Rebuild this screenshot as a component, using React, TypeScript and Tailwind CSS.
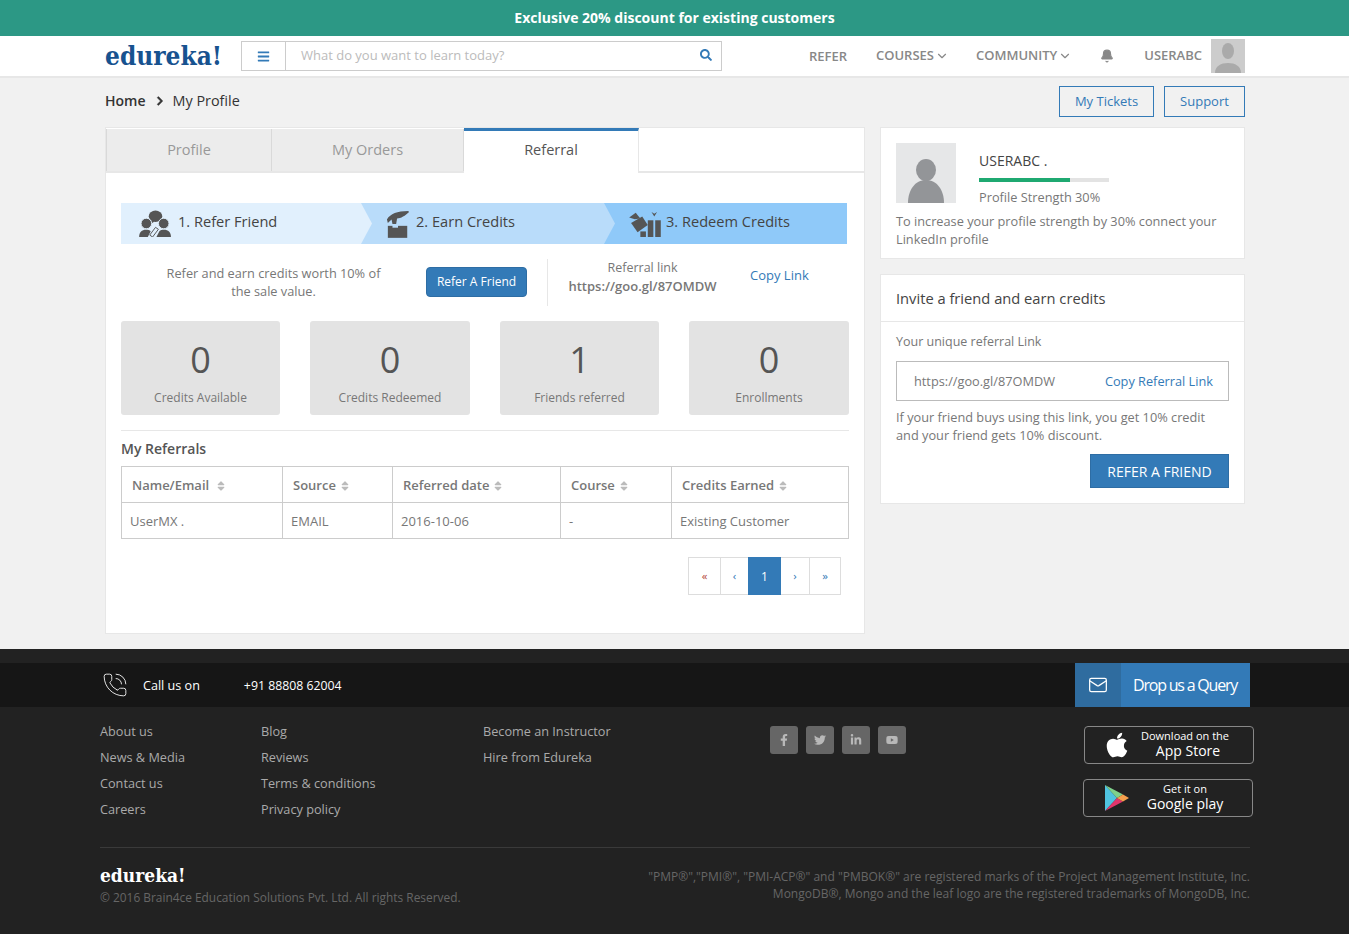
import { Bell, ChevronDown, Mail, PhoneCall } from "lucide-react";
import { FaApple, FaBars, FaChevronRight, FaFacebookF, FaLinkedinIn, FaSearch, FaSort, FaTwitter, FaYoutube } from "react-icons/fa";

const stats = [
  { value: "0", label: "Credits Available" },
  { value: "0", label: "Credits Redeemed" },
  { value: "1", label: "Friends referred" },
  { value: "0", label: "Enrollments" },
];

const columns = [
  { title: "Name/Email", width: "w-[160px]", gap: "ml-[6px]", body: "UserMX ." },
  { title: "Source", width: "w-[110px]", gap: "ml-[3px]", body: "EMAIL" },
  { title: "Referred date", width: "w-[168px]", gap: "ml-[3px]", body: "2016-10-06" },
  { title: "Course", width: "w-[111px]", gap: "ml-[3px]", body: "-" },
  { title: "Credits Earned", width: "w-[177px]", gap: "ml-[3px]", body: "Existing Customer" },
];

const footerCols = [
  { width: "w-[161px]", links: ["About us", "News & Media", "Contact us", "Careers"] },
  { width: "w-[222px]", links: ["Blog", "Reviews", "Terms & conditions", "Privacy policy"] },
  { width: "w-[287px]", links: ["Become an Instructor", "Hire from Edureka"] },
];

const Avatar = ({ className }: { className: string }) => (
  <svg viewBox="0 0 60 60" className={className}>
    <rect width="60" height="60" fill="#e6e7e8" />
    <ellipse cx="30" cy="27" rx="10" ry="11" fill="#939598" />
    <path d="M12 60 C12 47 19 37 30 37 C41 37 48 47 48 60 Z" fill="#939598" />
  </svg>
);

const FriendsIcon = () => (
  <svg viewBox="0 0 34 28" className="h-[27px] w-[33px]" fill="#555">
    <ellipse cx="17" cy="6.5" rx="7" ry="6" />
    <path d="M13 11 L11 15 L16 12 Z" />
    <circle cx="7.5" cy="14" r="5.5" stroke="#e1f0fd" />
    <circle cx="25.5" cy="14" r="5.5" stroke="#e1f0fd" />
    <path d="M0 28 C0 23 3 20.5 7 20.5 C9 20.5 11 21 12 22 L9 28 Z" />
    <path d="M33 28 C33 23 30 20.5 26 20.5 C24 20.5 22 21 21 22 L18 28 Z" />
    <path d="M11 26 L17 18 L20 20 L14 28 Z" fill="none" stroke="#555" />
  </svg>
);

const EarnIcon = () => (
  <svg viewBox="0 0 26 30" className="h-[28px] w-[24px]" fill="#555">
    <path d="M1 10 C5 4 12 1 24 1 L25 2 C21 6 16 9 12 9 L11 15 L7 15 L6 10 L2 14 Z" />
    <rect x="2" y="17" width="21" height="13" />
    <rect x="7" y="15" width="6" height="4" fill="#b9dcfa" />
  </svg>
);

const GiftIcon = () => (
  <svg viewBox="0 0 34 28" className="h-[26px] w-[32px]" fill="#555">
    <path d="M7 2 L12 8 L6 9 L0 7 Z" />
    <path d="M2 13 L14 6 L20 15 L9 23 Z" />
    <rect x="20" y="10" width="6" height="18" />
    <rect x="28" y="10" width="6" height="18" />
    <rect x="12" y="22" width="6" height="6" />
    <path d="M24 1 L27 3 L30 1 L27 6 Z" />
  </svg>
);

const PlayIcon = () => (
  <svg viewBox="0 0 24 26" className="h-[26px] w-[24px]">
    <path d="M0 0 L12 13 L0 26 Z" fill="#4fc3e0" />
    <path d="M0 0 L18 9.5 L12 13 Z" fill="#7fd18b" />
    <path d="M0 26 L18 16.5 L12 13 Z" fill="#e0356b" />
    <path d="M18 9.5 L24 13 L18 16.5 L12 13 Z" fill="#f6a04d" />
  </svg>
);

export default function App() {
  return (
    <div className="w-[1349px] bg-[#f1f1f1] font-['Open_Sans',sans-serif] text-[12.75px] text-[#777]">
      {/* Top banner */}
      <div className="flex h-9 items-center justify-center bg-[#2c9885] pb-[2px] text-[14px] font-bold text-white">
        Exclusive 20% discount for existing customers
      </div>

      {/* Nav */}
      <div className="h-[42px] border-b-2 border-[#e7e7e7] bg-white">
        <div className="ml-[105px] flex h-10 w-[1140px] items-center">
          <div className="w-[136px] font-['DejaVu_Serif_Condensed','DejaVu_Serif',serif] text-[26px] font-bold leading-none text-[#17528f]">
            edureka!
          </div>
          <div className="flex h-[30px] w-[481px] items-center border border-[#ccc]">
            <div className="flex h-full w-[44px] items-center justify-center border-r border-[#ccc] text-[#337ab7]">
              <FaBars size={13} />
            </div>
            <span className="ml-[15px] text-[13px] text-[#bbb]">What do you want to learn today?</span>
            <FaSearch size={12} className="ml-auto mr-[9px] mb-[2px] text-[#337ab7]" />
          </div>
          <div className="ml-auto flex items-center text-[13px] font-semibold text-[#888]">
            <span className="mt-px">REFER</span>
            <span className="ml-[29px] flex items-center">COURSES<ChevronDown size={14} className="ml-px" /></span>
            <span className="ml-[27px] flex items-center">COMMUNITY<ChevronDown size={14} className="ml-px" /></span>
            <Bell size={14} fill="#888" className="ml-[28px]" />
            <span className="ml-[30px]">USERABC</span>
            <div className="ml-[9px] flex h-[34px] w-[34px] items-end justify-center bg-[#ccc]">
              <svg viewBox="0 0 34 34" className="h-[34px] w-[34px]" fill="#aaa">
                <ellipse cx="17" cy="12" rx="6" ry="8" />
                <path d="M4 34 C4 27 10 24 17 24 C24 24 30 27 30 34 Z" />
              </svg>
            </div>
          </div>
        </div>
      </div>

      <div className="ml-[105px] w-[1140px]">
        {/* Breadcrumb */}
        <div className="flex h-[49px] items-start justify-between pt-2">
          <div className="mt-[5px] flex items-center text-[14.4px] leading-5 text-[#333]">
            <span className="text-[14px] font-semibold">Home</span>
            <FaChevronRight size={10} stroke="currentColor" strokeWidth={30} className="ml-[9px] mr-[8px]" />
            <span>My Profile</span>
          </div>
          <div className="flex gap-[10px]">
            <button className="h-[31px] w-[95px] border border-[#337ab7] text-[13px] text-[#337ab7]">My Tickets</button>
            <button className="h-[31px] w-[81px] border border-[#337ab7] text-[13px] text-[#337ab7]">Support</button>
          </div>
        </div>

        <div className="flex items-start justify-between">
          {/* Left card */}
          <div className="h-[507px] w-[760px] border border-[#e7e7e7] bg-white">
            <div className="flex h-[45px] border-b-2 border-[#e7e7e7] text-[14.5px]">
              <div className="mt-px flex h-[42px] w-[166px] items-center justify-center border-x border-[#d9d9d9] bg-[#ececec] pb-px text-[#999]">Profile</div>
              <div className="mt-px flex h-[42px] w-[192px] items-center justify-center border-r border-[#d9d9d9] bg-[#ececec] pb-px text-[#999]">My Orders</div>
              <div className="flex h-[45px] w-[175px] items-center justify-center border-r border-t-[3px] border-[#e7e7e7] border-t-[#337ab7] bg-white pb-[4px] text-[#555]">Referral</div>
            </div>

            <div className="px-[15px] pt-[30px]">
              {/* Steps */}
              <div className="flex h-[41px] w-[726px] bg-[#8fc9f9] text-[14.6px] text-[#444]">
                <div className="relative z-20 flex w-[251px] items-center gap-[6px] bg-[#e1f0fd] pl-[18px] [clip-path:polygon(0_0,240px_0,100%_50%,240px_100%,0_100%)]">
                  <FriendsIcon />
                  <span className="mb-[4px]">1. Refer Friend</span>
                </div>
                <div className="relative z-10 -ml-[11px] flex w-[254px] items-center gap-[6px] bg-[#b9dcfa] pl-[25px] [clip-path:polygon(0_0,243px_0,100%_50%,243px_100%,0_100%)]">
                  <EarnIcon />
                  <span className="mb-[4px]">2. Earn Credits</span>
                </div>
                <div className="-ml-[11px] flex flex-1 items-center gap-[5px] pl-[25px]">
                  <GiftIcon />
                  <span className="mb-[4px]">3. Redeem Credits</span>
                </div>
              </div>

              {/* Refer info */}
              <div className="mt-[15px] flex h-[47px] items-center">
                <p className="mb-[2px] w-[305px] px-[40px] text-center leading-[18px]">Refer and earn credits worth 10% of the sale value.</p>
                <button className="mb-[2px] h-[30px] w-[101px] rounded-sm border border-[#2e6da4] bg-[#337ab7] text-[12px] text-white">Refer A Friend</button>
                <div className="ml-5 h-[47px] w-px bg-[#e7e7e7]" />
                <div className="mb-[11px] w-[189px] text-center leading-[18px]">
                  <div className="text-[12.5px]">Referral link</div>
                  <div className="text-[13px] font-semibold">https://goo.gl/87OMDW</div>
                </div>
                <span className="mb-[14px] ml-[13px] text-[13px] text-[#337ab7]">Copy Link</span>
              </div>

              {/* Stats */}
              <div className="mt-[15px] grid w-[728px] grid-cols-[159px_160px_159px_160px] gap-[30px]">
                {stats.map((s) => (
                  <div key={s.label} className="flex h-[94px] flex-col items-center rounded-[3px] bg-[#e3e3e3] pt-[14px]">
                    <div className="text-[36px] leading-[50px] text-[#555]">{s.value}</div>
                    <div className="mt-[4px] text-[12px] leading-[18px] text-[#777]">{s.label}</div>
                  </div>
                ))}
              </div>

              <div className="mt-[15px] w-[728px] border-t border-[#e7e7e7] pt-[9px] text-[14px] font-semibold leading-[18px] text-[#555]">My Referrals</div>

              {/* Table */}
              <div className="mt-[8px] flex w-[728px] border border-[#ccc]">
                {columns.map((c, i) => (
                  <div key={c.title} className={`${c.width} ${i > 0 ? "border-l border-[#ccc]" : ""}`}>
                    <div className="flex h-9 items-center border-b border-[#ccc] pl-[10px] pt-[2px] text-[13px] font-semibold text-[#777]">
                      {c.title}
                      <FaSort size={12} className={`${c.gap} text-[#bbb]`} />
                    </div>
                    <div className="flex h-[35px] items-center pl-2 pt-[3px] text-[13px] text-[#777]">{c.body}</div>
                  </div>
                ))}
              </div>

              {/* Pagination */}
              <div className="mt-[18px] flex w-[720px] justify-end text-[11.5px] text-[#337ab7]">
                <div className="flex h-[38px] border border-[#ddd]">
                  <span className="flex w-[31px] items-center justify-center text-[#b5483c]">«</span>
                  <span className="flex w-[28px] items-center justify-center border-l border-[#ddd]">‹</span>
                  <span className="-my-px flex w-[33px] items-center justify-center bg-[#337ab7] pt-px text-[12px] text-white">1</span>
                  <span className="flex w-[28px] items-center justify-center">›</span>
                  <span className="flex w-[31px] items-center justify-center border-l border-[#ddd]">»</span>
                </div>
              </div>
            </div>
          </div>

          {/* Right column */}
          <div className="w-[365px]">
            <div className="h-[132px] border border-[#e7e7e7] bg-white px-[15px] pt-[15px]">
              <div className="flex">
                <Avatar className="h-[60px] w-[60px]" />
                <div className="ml-[23px] flex-1">
                  <div className="mt-[9px] text-[14px] leading-[18px] text-[#444]">USERABC .</div>
                  <div className="mt-[8px] h-[4px] w-[130px] bg-[#e3e3e3]">
                    <div className="h-full w-[91px] bg-[#1fa971]" />
                  </div>
                  <div className="mt-[6px] text-[12.75px] leading-[18px]">Profile Strength 30%</div>
                </div>
              </div>
              <p className="mt-[6px] leading-[18px]">To increase your profile strength by 30% connect your LinkedIn profile</p>
            </div>

            <div className="mt-[15px] h-[230px] border border-[#e7e7e7] bg-white">
              <div className="flex h-[47px] items-center border-b border-[#e7e7e7] px-[15px] text-[14.7px] text-[#444]">Invite a friend and earn credits</div>
              <div className="px-[15px]">
                <div className="mt-[11px] text-[12.5px] leading-[18px]">Your unique referral Link</div>
                <div className="mt-[10px] flex h-10 w-[333px] items-center justify-between border border-[#bbb] pl-[17px] pr-[15px] pt-[2px]">
                  <span>https://goo.gl/87OMDW</span>
                  <span className="text-[#337ab7]">Copy Referral Link</span>
                </div>
                <p className="mt-[7px] leading-[18px]">If your friend buys using this link, you get 10% credit and your friend gets 10% discount.</p>
                <div className="mt-[10px] flex w-[333px] justify-end">
                  <button className="h-[34px] w-[139px] border border-[#2e6da4] bg-[#337ab7] text-[14px] text-white">REFER A FRIEND</button>
                </div>
              </div>
            </div>
          </div>
        </div>
      </div>

      {/* Footer */}
      <div className="mt-[15px] h-[285px] bg-[#222] pt-[14px]">
        <div className="h-[44px] bg-[#161616]">
          <div className="ml-[100px] flex h-full w-[1150px] items-center text-white">
            <PhoneCall size={26} strokeWidth={0.8} className="ml-[2px]" />
            <span className="ml-[15px] pt-[2px] text-[12.6px]">Call us on</span>
            <span className="ml-[44px] pt-[2px] text-[12.3px]">+91 88808 62004</span>
            <div className="ml-auto flex h-full w-[175px] items-center bg-[#337ab7]">
              <div className="flex h-full w-[46px] items-center justify-center bg-[#2f6c9f]">
                <Mail size={20} strokeWidth={1.5} />
              </div>
              <span className="ml-3 text-[16px] tracking-[-1.2px]">Drop us a Query</span>
            </div>
          </div>
        </div>

        <div className="ml-[100px] w-[1150px]">
          <div className="flex h-[141px] border-b border-[#3a3a3a] pt-[11px]">
            {footerCols.map((col) => (
              <div key={col.links[0]} className={`${col.width} text-[12.7px] text-[#aaa]`}>
                {col.links.map((l) => (
                  <div key={l} className="h-[26px] leading-[26px]">{l}</div>
                ))}
              </div>
            ))}
            <div className="flex w-[314px] items-start gap-2 pt-2 text-[#b8b8b8]">
              {[FaFacebookF, FaTwitter, FaLinkedinIn, FaYoutube].map((Icon, i) => (
                <div key={i} className="flex h-7 w-7 items-center justify-center rounded-[3px] bg-[#666]">
                  <Icon size={12} />
                </div>
              ))}
            </div>
            <div className="-mr-1 flex flex-col gap-[15px] pt-2 text-white">
              <div className="flex h-[38px] w-[170px] items-center rounded-[4px] border border-[#888] pl-[18px]">
                <FaApple size={28} />
                <div className="ml-[9px] w-[90px] pb-[2px] text-center">
                  <div className="text-[11px] leading-[12px]">Download on the</div>
                  <div className="ml-[6px] text-[14px] font-medium leading-[17px]">App Store</div>
                </div>
              </div>
              <div className="-ml-px flex h-[38px] w-[170px] items-center rounded-[4px] border border-[#888] pl-[21px]">
                <PlayIcon />
                <div className="ml-[9px] w-[94px] pb-[2px] text-center">
                  <div className="text-[11px] leading-[12px]">Get it on</div>
                  <div className="text-[14px] leading-[17px]">Google play</div>
                </div>
              </div>
            </div>
          </div>

          <div className="flex justify-between pt-[16px]">
            <div>
              <div className="font-['DejaVu_Serif_Condensed','DejaVu_Serif',serif] text-[19px] font-bold leading-[22px] text-white">edureka!</div>
              <div className="mt-[2px] text-[11.9px] leading-[18px] text-[#666]">© 2016 Brain4ce Education Solutions Pvt. Ltd. All rights Reserved.</div>
            </div>
            <div className="mt-[4px] text-right text-[12px] leading-[17px] text-[#666]">
              <div>"PMP®","PMI®", "PMI-ACP®" and "PMBOK®" are registered marks of the Project Management Institute, Inc.</div>
              <div>MongoDB®, Mongo and the leaf logo are the registered trademarks of MongoDB, Inc.</div>
            </div>
          </div>
        </div>
      </div>
    </div>
  );
}
